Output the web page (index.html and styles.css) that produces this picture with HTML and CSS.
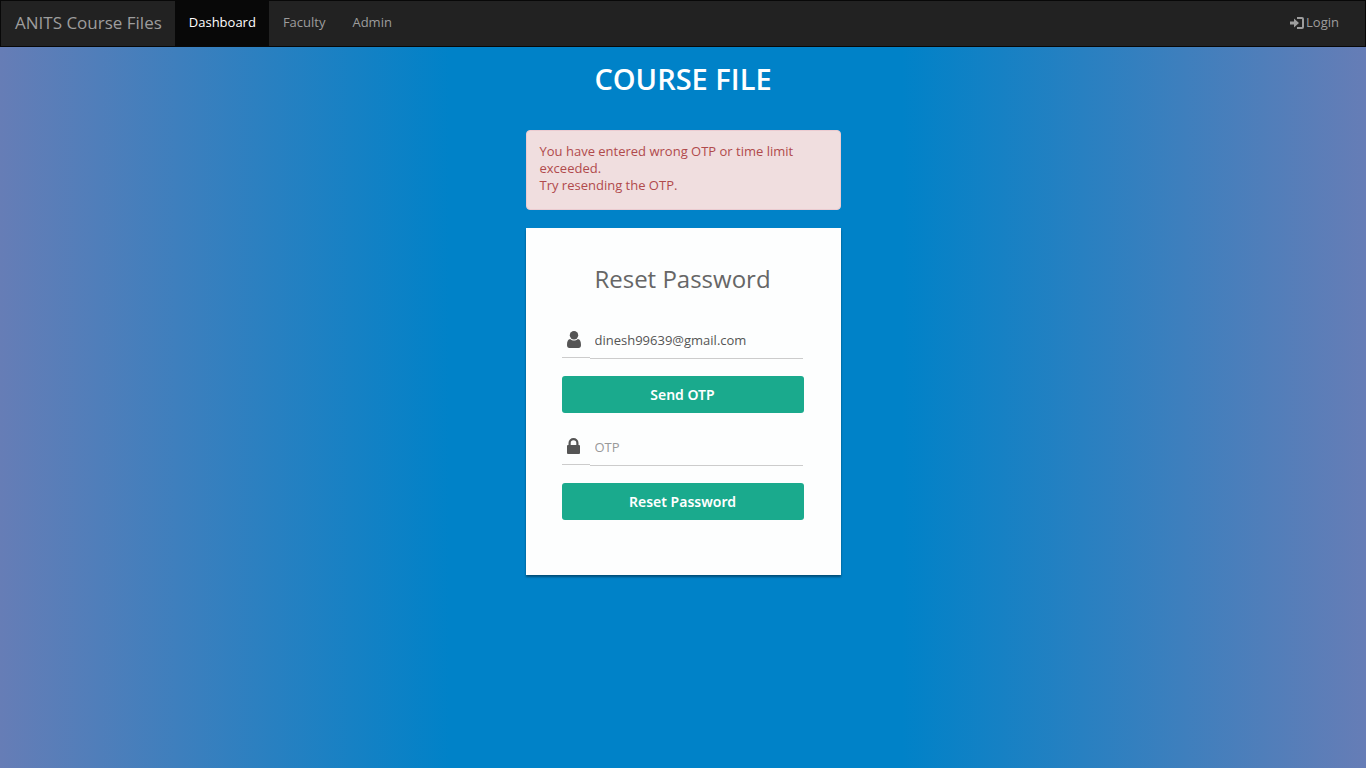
FILE: index.html
```html
<!DOCTYPE html>
<html lang="en">
<head>
<meta charset="utf-8">
<meta name="viewport" content="width=device-width, initial-scale=1">
<title>ANITS Course Files</title>
<link rel="stylesheet" href="styles.css">
</head>
<body>
<nav class="navbar">
  <a class="brand" href="#">ANITS Course Files</a>
  <a class="nav-link active" href="#">Dashboard</a>
  <a class="nav-link" href="#">Faculty</a>
  <a class="nav-link" href="#">Admin</a>
  <a class="nav-link login" href="#">
    <svg class="login-icon" viewBox="0 0 14 12" aria-hidden="true"><path d="M0 4.500h4V1.500L9 6l-5 4.500V7.500H0z"/><path d="M7 0h5q2 0 2 2v8q0 2-2 2H7v-2h5V2H7z"/></svg>
    <span>Login</span>
  </a>
</nav>
<main class="page">
  <h1 class="page-title">Course File</h1>
  <div class="alert" role="alert">You have entered wrong OTP or time limit exceeded.<br>Try resending the OTP.</div>
  <form class="card">
    <h2 class="card-title">Reset Password</h2>
    <div class="field">
      <label class="field-icon" for="email" aria-label="Email">
        <svg class="user-icon" viewBox="0 0 14 17" aria-hidden="true"><path d="M3.200 8C5.500 10 8.500 10 10.800 8C13 8.200 14 10.500 14 14Q14 17 11.500 17H2.500Q0 17 0 14C0 10.500 1 8.200 3.200 8z"/><circle cx="7" cy="4.200" r="4.200"/></svg>
      </label>
      <input class="field-input" id="email" type="email" value="dinesh99639@gmail.com">
    </div>
    <button class="button" type="button">Send OTP</button>
    <div class="field">
      <label class="field-icon" for="otp" aria-label="OTP">
        <svg class="lock-icon" viewBox="0 0 13 16" aria-hidden="true"><path fill-rule="evenodd" d="M1.500 7V5a5 5 0 0 1 10 0v2H12q1 0 1 1v7q0 1-1 1H1q-1 0-1-1V8q0-1 1-1zM3.700 7h5.600V5a2.800 2.800 0 0 0-5.600 0z"/></svg>
      </label>
      <input class="field-input" id="otp" type="text" placeholder="OTP">
    </div>
    <button class="button" type="submit">Reset Password</button>
  </form>
</main>
</body>
</html>
```
FILE: styles.css
```css
* { box-sizing: border-box; }
body {
  margin: 0;
  min-height: 100vh;
  font: 13px/17px "Open Sans", "Noto Sans", sans-serif;
  background: linear-gradient(to right, #667db6, #0082c8 33%, #0082c8 66%, #667db6);
}
.navbar {
  display: flex;
  min-height: 47px;
  padding-right: 13px;
  background: #222;
  border: 1px solid #080808;
}
.brand, .nav-link {
  display: flex;
  align-items: center;
  padding: 0 14px 2px;
  color: #9d9d9d;
  text-decoration: none;
}
.brand { padding-right: 13px; font-size: 17px; }
.nav-link { padding-right: 13px; }
.active { color: #fff; background: #080808; font-weight: 500; }
.login { gap: 2px; margin-left: auto; }
.login-icon { width: 14px; height: 12px; fill: currentColor; }
.page {
  width: 315px;
  max-width: 100%;
  margin: 0 auto;
  padding: 14px 0 36px;
}
.page-title {
  margin: 0 0 33px;
  font-size: 29px;
  line-height: 36px;
  font-weight: 600;
  text-align: center;
  text-transform: uppercase;
  color: #fff;
}
.alert {
  margin-bottom: 18px;
  padding: 12px 13px 15px;
  color: #b04a4c;
  background: #f0dedf;
  border: 1px solid #ebccd1;
  border-radius: 4px;
}
.card {
  display: flex;
  flex-direction: column;
  gap: 17px;
  padding: 36px 37px 55px 36px;
  background: #fdfefe;
  box-shadow: 0 2px 2px rgba(0, 0, 0, .4);
}
.card-title {
  margin: 0 0 12px;
  font-size: 24px;
  line-height: 30px;
  font-weight: 400;
  text-align: center;
  color: #666;
}
.field { display: flex; align-items: flex-start; padding-right: 1px; }
.field-icon {
  display: flex;
  align-items: center;
  justify-content: center;
  width: 28px;
  height: 35px;
  padding: 0 4px 2px 0;
  border-bottom: 1px solid #ccc;
}
.user-icon, .lock-icon { fill: #555; flex: none; }
.user-icon { width: 14px; height: 17px; }
.lock-icon { width: 13px; height: 16px; }
.field-input {
  flex: 1;
  min-width: 0;
  height: 36px;
  padding: 0 5px 2px;
  font: inherit;
  color: #555;
  background: transparent;
  border: 0;
  border-bottom: 1px solid #ccc;
  outline: 0;
}
.field-input::placeholder { color: #999; opacity: 1; }
.button {
  height: 37px;
  padding: 0 12px;
  font: 600 14px/20px "Noto Sans", "Open Sans", sans-serif;
  color: #fff;
  background: #1aaa8d;
  border: 0;
  border-radius: 3px;
}
```
